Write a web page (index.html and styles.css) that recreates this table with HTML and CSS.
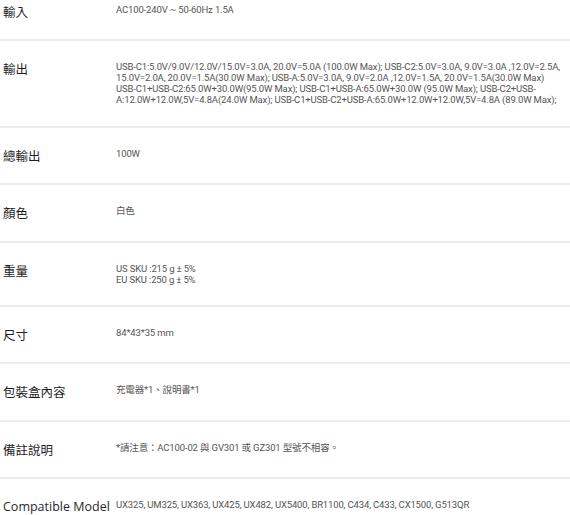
FILE: index.html
```html
<!DOCTYPE html>
<html lang="zh-Hant">
<head>
  <meta charset="UTF-8" />
  <meta name="viewport" content="width=device-width, initial-scale=1.0" />
  <title>規格</title>
  <link rel="stylesheet" href="styles.css">
</head>
<body>
  <div class="specs">
    <div class="row">
      <div class="label">輸入</div>
      <div class="value">AC100-240V ~ 50-60Hz 1.5A</div>
    </div>
    <div class="row">
      <div class="label">輸出</div>
      <div class="value">USB-C1:5.0V/9.0V/12.0V/15.0V=3.0A, 20.0V=5.0A (100.0W Max); USB-C2:5.0V=3.0A, 9.0V=3.0A ,12.0V=2.5A, 15.0V=2.0A, 20.0V=1.5A(30.0W Max); USB-A:5.0V=3.0A, 9.0V=2.0A ,12.0V=1.5A, 20.0V=1.5A(30.0W Max)<br>USB-C1+USB-C2:65.0W+30.0W(95.0W Max); USB-C1+USB-A:65.0W+30.0W (95.0W Max); USB-C2+USB-A:12.0W+12.0W,5V=4.8A(24.0W Max); USB-C1+USB-C2+USB-A:65.0W+12.0W+12.0W,5V=4.8A (89.0W Max);</div>
    </div>
    <div class="row">
      <div class="label">總輸出</div>
      <div class="value">100W</div>
    </div>
    <div class="row">
      <div class="label">顏色</div>
      <div class="value">白色</div>
    </div>
    <div class="row">
      <div class="label">重量</div>
      <div class="value">US SKU :215 g ± 5%<br>EU SKU :250 g ± 5%</div>
    </div>
    <div class="row">
      <div class="label">尺寸</div>
      <div class="value">84*43*35 mm</div>
    </div>
    <div class="row">
      <div class="label">包裝盒內容</div>
      <div class="value">充電器*1、說明書*1</div>
    </div>
    <div class="row">
      <div class="label">備註說明</div>
      <div class="value">*請注意：AC100-02 與 GV301 或 GZ301 型號不相容。</div>
    </div>
    <div class="row">
      <div class="label label-en">Compatible Model</div>
      <div class="value">UX325, UM325, UX363, UX425, UX482, UX5400, BR1100, C434, C433, CX1500, G513QR</div>
    </div>
  </div>
</body>
</html>
```

FILE: styles.css
```css
body {
  margin: 0;
  background-color: #ffffff;
  font-family: 'Roboto', 'Noto Sans CJK TC', sans-serif;
  overflow: hidden;
}
.specs {
  margin-top: -16px;
}
.row {
  display: grid;
  grid-template-columns: 113px 1fr;
  padding: 20px 4px 20.4px 3px;
  border-bottom: 2px solid #ebebeb;
}
.label {
  font-family: 'Noto Sans CJK TC', sans-serif;
  font-size: 12.5px;
  line-height: 15px;
  color: #1e1e1e;
  font-weight: 400;
}
.label-en {
  font-family: 'Open Sans', 'Noto Sans CJK TC', sans-serif;
  font-size: 12.5px;
  color: #2a2a2a;
  white-space: nowrap;
}
.value {
  font-size: 9.5px;
  line-height: 11px;
  color: #555555;
  letter-spacing: -0.15px;
}
```
